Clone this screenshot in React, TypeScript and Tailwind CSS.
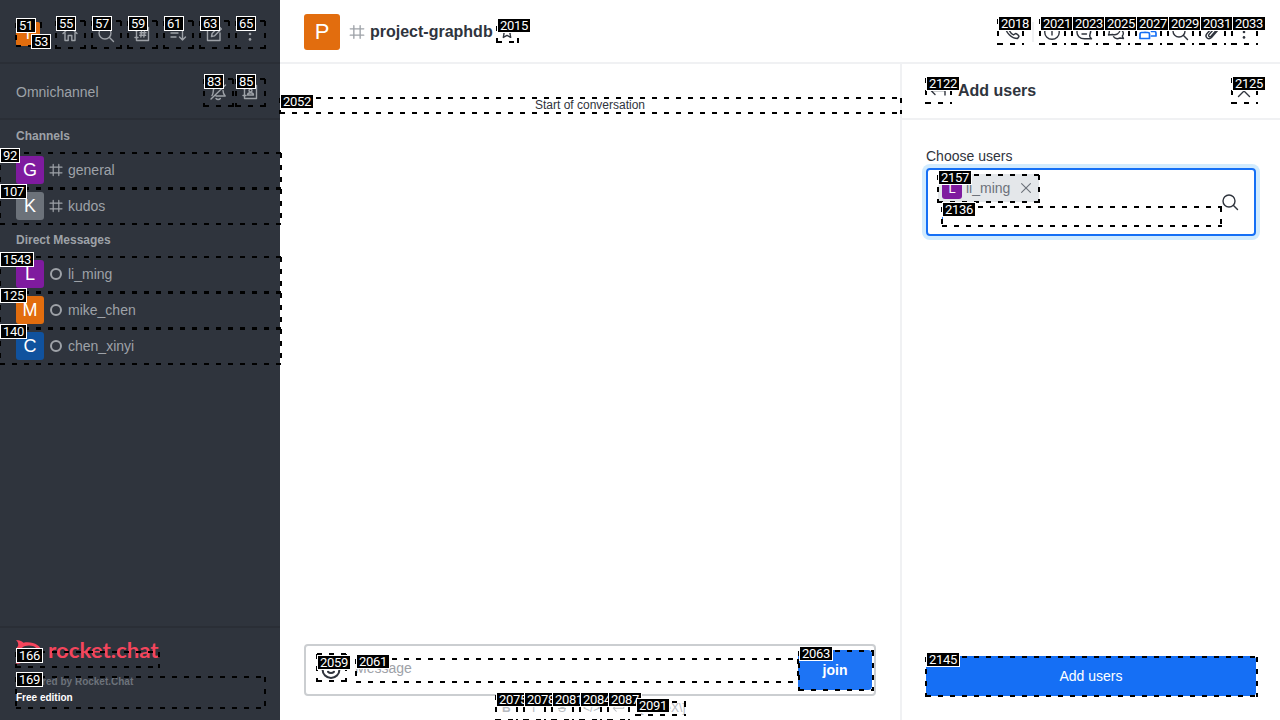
import type { ReactNode } from "react";

type IconProps = { children: ReactNode; size?: number; width?: number };

function Icon({ children, size = 20, width = 1.4 }: IconProps) {
  return (
    <svg
      width={size}
      height={size}
      viewBox="0 0 20 20"
      fill="none"
      stroke="currentColor"
      strokeWidth={width}
      strokeLinecap="round"
      strokeLinejoin="round"
      className="shrink-0"
    >
      {children}
    </svg>
  );
}

const HomeIcon = () => (
  <Icon>
    <path d="M3 9.500 10 3l7 6.500M5 8.500v8h3.200v-5h3.600v5H15v-8" />
  </Icon>
);
const SearchIcon = () => (
  <Icon>
    <circle cx="9" cy="9" r="6" />
    <path d="m13.500 13.500 4 4" />
  </Icon>
);
const DirectoryIcon = () => (
  <Icon>
    <path d="M4.500 3.500h12v13h-12zM3 6.500h3M3 13.500h3M9.500 7l-.6 6M12.500 7l-.6 6M8 8.800h6M7.700 11.300h6" />
  </Icon>
);
const SortIcon = () => (
  <Icon>
    <path d="M3 5h9M3 9h7M3 13h5M14.500 4v12M11.500 13l3 3 3-3" />
  </Icon>
);
const EditIcon = () => (
  <Icon>
    <path d="M11 4H3.500v12.500H16V9M7.500 12.500l.6-3L15 2.600l2.300 2.300-6.900 7z" />
  </Icon>
);
const KebabIcon = () => (
  <svg width="20" height="20" viewBox="0 0 20 20" fill="currentColor">
    <circle cx="10" cy="4.500" r="1.300" />
    <circle cx="10" cy="10" r="1.300" />
    <circle cx="10" cy="15.400" r="1.300" />
  </svg>
);
const BellOffIcon = () => (
  <Icon>
    <path d="M3 17 17.500 3M4 13.500c1.500-1.500 1-4 1.500-6 1-4 6.500-5 8.500-1.500M15 8.500c0 2.500.3 3.500 2.200 5.500H8M8 16.500c1 1.300 3.300 1.300 4.300 0" />
  </Icon>
);
const ContactIcon = () => (
  <Icon>
    <path d="M4.500 3.500h12v13h-12zM3 6.500h3M3 13.500h3M7.500 13c0-3 6-3 6 0z" />
    <circle cx="10.500" cy="8.500" r="1.500" />
  </Icon>
);
const HashIcon = ({ size = 16 }: { size?: number }) => (
  <Icon size={size} width={1.500}>
    <path d="M6.500 3v14M13.500 3v14M2.500 6.500h15M2.500 13.500h15" />
  </Icon>
);
const StarIcon = () => (
  <Icon size={16} width={1.700}>
    <path d="m10 2.500 2.300 4.800 5.200.7-3.800 3.600.9 5.200-4.600-2.500-4.600 2.500.9-5.200L2.500 8l5.200-.7z" />
  </Icon>
);
const PhoneIcon = () => (
  <Icon>
    <path d="M3.500 4.500c0 6 6 12 12 12l1.500-2c0-1-2.500-3-3.500-3l-2 1.300c-1.500-.6-3.200-2.500-4-4L9 7c0-1.500-2-4-3-4z" />
  </Icon>
);
const InfoIcon = () => (
  <Icon>
    <circle cx="10" cy="10" r="7.300" />
    <path d="M10 6v.4M10 9v4" />
  </Icon>
);
const ThreadsIcon = () => (
  <Icon>
    <path d="M17.500 16.800h-7C.5 16.800.5 3 10 3c5.500 0 8 5 6 9.300-.6 1.500.2 3.500 1.500 4.500M7 8h6M8 12h4.500" />
  </Icon>
);
const DiscussionIcon = () => (
  <Icon>
    <path d="M2.500 13c1.200-2 .7-3 .7-5C4 2 14 2 14 7.500c0 4-4 6-7.500 5zM7.500 14.700c1.500 2 4.500 2.200 6.500 1.300l3.500.5-1.200-2.500c1.400-1.300 1.400-4-.2-5.500" />
  </Icon>
);
const TeamIcon = () => (
  <Icon width={1.700}>
    <path d="M2 16.500V12c0-1 .7-1.500 1.500-1.500H10c.8 0 1.500.5 1.500 1.500v4.500zM13.500 14H18v-3c0-.8-.6-1.500-1.500-1.500h-3" />
    <circle cx="6.700" cy="6" r="2.500" />
    <circle cx="14.500" cy="5.500" r="2" />
  </Icon>
);
const ClipIcon = () => (
  <Icon>
    <path d="m16 8-6.500 7.500c-3 3-7.300-.5-4.700-3.800L12 3.800c2.400-2.300 5.600.5 3.600 3L9 14.300c-1.500 1.300-3.200-.3-2-1.800l6-6.700" />
  </Icon>
);
const CloseIcon = ({ size = 20 }: { size?: number }) => (
  <Icon size={size}>
    <path d="m4.500 4.500 11 11M15.500 4.500l-11 11" />
  </Icon>
);
const BackIcon = () => (
  <Icon>
    <path d="M17 14V9.500H3M7 5.500l-4 4 4 4" />
  </Icon>
);
const EmojiIcon = () => (
  <Icon size={24} width={1.700}>
    <circle cx="10" cy="9.700" r="7" />
    <path d="M7.500 7.500v.4M12.500 7.500v.4M7.500 11.500c1.300 1.400 3.700 1.400 5 0" />
  </Icon>
);

const topActions = [HomeIcon, SearchIcon, DirectoryIcon, SortIcon, EditIcon, KebabIcon];
const roomActions = [InfoIcon, ThreadsIcon, DiscussionIcon, TeamIcon, SearchIcon, ClipIcon, KebabIcon];

const channels = [
  { name: "general", letter: "G", color: "bg-[#7f1b9f]" },
  { name: "kudos", letter: "K", color: "bg-[#6c727a]" },
];
const directs = [
  { name: "li_ming", letter: "L", color: "bg-[#7f1b9f]" },
  { name: "mike_chen", letter: "M", color: "bg-[#e26d0e]" },
  { name: "chen_xinyi", letter: "C", color: "bg-[#10529e]" },
];

function RoomRow({ name, letter, color, direct }: { name: string; letter: string; color: string; direct?: boolean }) {
  return (
    <div className="flex h-9 items-center px-4 text-[#9ea2a8]">
      <div className={`flex size-7 items-center justify-center rounded-[3px] text-[18px] leading-none text-white ${color}`}>
        {letter}
      </div>
      <div className="ml-1 mr-1 flex w-4 justify-center">
        {direct ? <span className="size-3 rounded-full border-2 border-[#9ea2a8]" /> : <HashIcon />}
      </div>
      <span className="text-sm">{name}</span>
    </div>
  );
}

function Sidebar() {
  return (
    <aside className="flex w-[280px] shrink-0 flex-col bg-[#2f343d] text-[#9ea2a8]">
      <div className="flex h-16 items-center justify-between border-b-2 border-[#2a2e36] pl-4 pr-5 pt-1.5">
        <div className="flex size-6 items-center justify-center rounded-[2px] bg-[#e26d0e] text-base text-white">T</div>
        <div className="flex gap-4">
          {topActions.map((Action, i) => (
            <Action key={i} />
          ))}
        </div>
      </div>
      <div className="flex h-14 items-center justify-between border-b-2 border-[#2a2e36] pl-4 pr-5 pt-0.5">
        <span className="text-sm">Omnichannel</span>
        <div className="flex gap-3">
          <BellOffIcon />
          <ContactIcon />
        </div>
      </div>
      <div className="flex h-8 items-center px-4 text-xs font-bold">Channels</div>
      {channels.map((room) => (
        <RoomRow key={room.name} {...room} />
      ))}
      <div className="flex h-8 items-center px-4 text-xs font-bold">Direct Messages</div>
      {directs.map((room) => (
        <RoomRow key={room.name} {...room} direct />
      ))}
      <div className="mt-auto h-[94px] border-t-2 border-[#2a2e36] px-4 pt-3">
        <svg width="160" height="25" viewBox="0 0 160 25" fill="#f5455c">
          <path d="M0 0c3 0 5.500.8 7.500 2.700C16 .8 25.500 5 25.500 12S16 23 7.500 21.300C5.500 23.200 3 24 0 24c2-2 2.700-4 2-6-3-3.500-3-8.500 0-12C2.700 4 2 2 0 0Zm13 5.500C7.500 5.500 4 8.400 4 12s3.500 6.500 9 6.500 9-2.900 9-6.500-3.500-6.500-9-6.500Z" />
          <text x="32" y="17.500" textLength="110.500" lengthAdjust="spacingAndGlyphs" className="font-['Lato'] text-[21px] font-bold">
            rocket.chat
          </text>
        </svg>
        <div className="text-[10px] font-bold leading-4">
          <div className="mt-[9px] text-[#6c727a]">Powered by Rocket.Chat</div>
          <div className="text-white">Free edition</div>
        </div>
      </div>
    </aside>
  );
}

function Composer() {
  return (
    <div className="h-[76px] shrink-0 px-6">
      <div className="flex h-[52px] w-[572px] items-center rounded border-2 border-[#cbced1] pl-[13px] pr-[2px]">
        <div className="text-[#2f343d]">
          <EmojiIcon />
        </div>
        <span className="ml-[12px] pb-1 text-sm text-[#9ea2a8]">Message</span>
        <button className="ml-auto flex h-10 w-[74px] items-center justify-center rounded bg-[#1d74f5] text-sm font-bold text-white">
          join
        </button>
      </div>
      <div className="flex h-[23px] items-center pl-[195px] text-xs text-[#b6babf]">
        <span className="w-7 pl-[3px] font-bold">B</span>
        <span className="w-7 pl-[5px]">I</span>
        <span className="w-7 pl-[3px] line-through">S</span>
        <span className="w-7">&lt;/&gt;</span>
        <span className="w-7">
          <Icon size={15}>
            <path d="M17 5v6H3M7 7l-4 4 4 4" />
          </Icon>
        </span>
        <span className="ml-[-2px] text-[12px]">\[KaTeX\]</span>
      </div>
    </div>
  );
}

function AddUsers() {
  return (
    <section className="flex w-[380px] shrink-0 flex-col border-l-2 border-[#f0f1f3]">
      <div className="flex h-14 items-center border-b-2 border-[#f0f1f3] px-[26px]">
        <BackIcon />
        <h2 className="ml-2.5 text-base font-bold">Add users</h2>
        <div className="ml-auto">
          <CloseIcon />
        </div>
      </div>
      <div className="flex flex-1 flex-col px-6 pt-[26px] pb-6">
        <label className="text-sm leading-5">Choose users</label>
        <div className="mt-0.5 flex h-[68px] w-[330px] items-center rounded border-2 border-[#156ff5] pl-[10px] pr-[14px] ring-4 ring-[#d1ebfe]">
          <div className="flex h-full flex-col pt-[4px]">
            <div className="flex h-7 w-[101px] items-center bg-[#e4e7ea] pl-1 text-sm text-[#6c727a]">
              <span className="mt-0.5 flex size-5 items-center justify-center rounded-[3px] bg-[#7f1b9f] text-[13px] text-white">L</span>
              <span className="ml-1 pb-px">li_ming</span>
              <span className="ml-2">
                <CloseIcon size={16} />
              </span>
            </div>
            <span className="ml-[4px] mt-3 h-[9px] w-px bg-[#156ff5]" />
          </div>
          <div className="ml-auto">
            <SearchIcon />
          </div>
        </div>
        <button className="mt-auto h-10 w-[330px] rounded bg-[#156ff5] text-sm text-white">Add users</button>
      </div>
    </section>
  );
}

type Mark = { id: string; label: [number, number]; box?: [number, number, number, number] };

// Each box holds its left, top, right and bottom edges.
const marks: Mark[] = [
  { id: "51", label: [16, 18], box: [15, 22, 42, 47] },
  { id: "53", label: [31, 34] },
  { id: "55", label: [56, 16], box: [55, 20, 86, 49] },
  { id: "57", label: [92, 16], box: [91, 20, 122, 49] },
  { id: "59", label: [128, 16], box: [127, 20, 158, 49] },
  { id: "61", label: [164, 16], box: [163, 20, 194, 49] },
  { id: "63", label: [200, 16], box: [199, 20, 230, 49] },
  { id: "65", label: [236, 16], box: [235, 20, 266, 49] },
  { id: "83", label: [204, 74], box: [203, 78, 234, 107] },
  { id: "85", label: [236, 74], box: [235, 78, 266, 107] },
  { id: "92", label: [0, 148], box: [-1, 152, 282, 189] },
  { id: "107", label: [0, 184], box: [-1, 188, 282, 225] },
  { id: "1543", label: [0, 252], box: [-1, 256, 282, 293] },
  { id: "125", label: [0, 288], box: [-1, 292, 282, 329] },
  { id: "140", label: [0, 324], box: [-1, 328, 282, 365] },
  { id: "166", label: [16, 648], box: [15, 651, 160, 668] },
  { id: "169", label: [16, 672], box: [15, 676, 266, 709] },
  { id: "2015", label: [497, 18], box: [496, 25, 519, 43] },
  { id: "2018", label: [998, 16], box: [997, 18, 1024, 45] },
  { id: "2021", label: [1040, 16], box: [1039, 18, 1066, 45] },
  { id: "2023", label: [1072, 16], box: [1071, 18, 1098, 45] },
  { id: "2025", label: [1104, 16], box: [1103, 18, 1130, 45] },
  { id: "2027", label: [1136, 16], box: [1135, 18, 1162, 45] },
  { id: "2029", label: [1168, 16], box: [1167, 18, 1194, 45] },
  { id: "2031", label: [1200, 16], box: [1199, 18, 1226, 45] },
  { id: "2033", label: [1232, 16], box: [1231, 18, 1258, 45] },
  { id: "2052", label: [280, 94], box: [279, 97, 902, 114] },
  { id: "2059", label: [317, 655], box: [316, 653, 347, 682] },
  { id: "2061", label: [356, 654], box: [355, 658, 799, 683] },
  { id: "2063", label: [799, 646], box: [798, 650, 874, 691] },
  { id: "2075", label: [496, 692], box: [495, 694, 518, 721] },
  { id: "2078", label: [524, 692], box: [523, 694, 546, 721] },
  { id: "2081", label: [552, 692], box: [551, 694, 574, 721] },
  { id: "2084", label: [580, 692], box: [579, 694, 602, 721] },
  { id: "2087", label: [608, 692], box: [607, 694, 630, 721] },
  { id: "2091", label: [636, 698], box: [635, 701, 686, 716] },
  { id: "2122", label: [926, 76], box: [925, 77, 952, 104] },
  { id: "2125", label: [1232, 76], box: [1231, 77, 1258, 104] },
  { id: "2136", label: [942, 202], box: [941, 206, 1222, 227] },
  { id: "2145", label: [926, 652], box: [925, 656, 1258, 697] },
  { id: "2157", label: [938, 170], box: [937, 174, 1040, 203] },
];

function DashedBox({ box }: { box: [number, number, number, number] }) {
  const [left, top, right, bottom] = box;
  return (
    <div className="absolute" style={{ left, top, width: right - left, height: bottom - top }}>
      <div className="absolute left-px right-0 top-0 h-0.5 bg-[repeating-linear-gradient(to_right,#000_0_5px,transparent_5px_12px)]" />
      <div className="absolute bottom-0 left-px right-0 h-0.5 bg-[repeating-linear-gradient(to_right,#000_0_5px,transparent_5px_12px)]" />
      <div className="absolute bottom-0 left-0 top-px w-0.5 bg-[repeating-linear-gradient(to_bottom,#000_0_5px,transparent_5px_12px)]" />
      <div className="absolute bottom-0 right-0 top-px w-0.5 bg-[repeating-linear-gradient(to_bottom,#000_0_5px,transparent_5px_12px)]" />
    </div>
  );
}

function Overlay() {
  return (
    <div className="pointer-events-none absolute inset-0 overflow-hidden">
      {marks.map(({ id, box }) => (box ? <DashedBox key={id} box={box} /> : null))}
      {marks.map(({ id, label }) => (
        <div
          key={id}
          className="absolute flex h-[15px] items-center justify-center border border-white bg-black font-['Roboto',sans-serif] text-[13px] leading-none tracking-[-0.3px] text-white"
          style={{ left: label[0], top: label[1], width: id.length * 7 + 6 }}
        >
          {id}
        </div>
      ))}
    </div>
  );
}

export default function App() {
  return (
    <div className="relative flex h-[720px] w-[1280px] overflow-hidden bg-white font-['Liberation_Sans',Arial,sans-serif] text-[#2f343d]">
      <Sidebar />
      <div className="flex min-w-0 flex-1 flex-col">
        <header className="flex h-16 shrink-0 items-center border-b-2 border-[#f0f1f3] px-6 pt-0.5">
          <div className="flex size-9 items-center justify-center rounded-[3px] bg-[#e26d0e] text-[22px] leading-none text-white">P</div>
          <div className="ml-2 mr-1 text-[#9ea2a8]">
            <HashIcon size={18} />
          </div>
          <h1 className="pb-px text-base font-bold">project-graphdb</h1>
          <div className="ml-1.5">
            <StarIcon />
          </div>
          <div className="ml-auto flex items-center">
            <PhoneIcon />
            <div className="ml-2.5 mr-2 h-5 w-0.5 bg-[#f0f1f3]" />
            <div className="mr-[2px] flex gap-3">
              {roomActions.map((Action, i) => (
                <div key={i} className={Action === TeamIcon ? "text-[#156ff5]" : ""}>
                  <Action />
                </div>
              ))}
            </div>
          </div>
        </header>
        <div className="flex min-h-0 flex-1">
          <main className="flex w-[620px] flex-col">
            <div className="flex-1 pt-8 text-center text-xs leading-[18px]">Start of conversation</div>
            <Composer />
          </main>
          <AddUsers />
        </div>
      </div>
      <Overlay />
    </div>
  );
}
